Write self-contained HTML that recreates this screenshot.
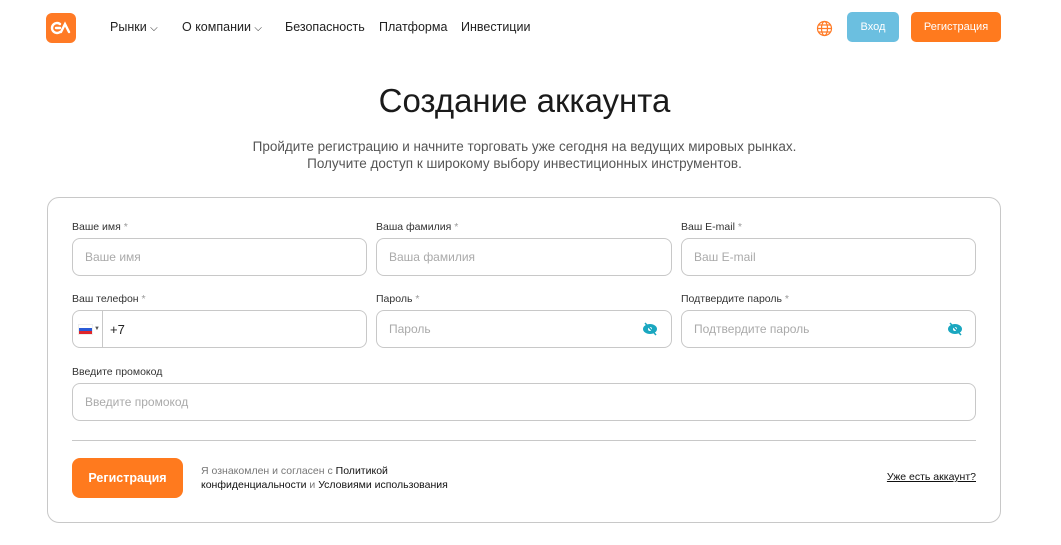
<!DOCTYPE html>
<html><head><meta charset="utf-8"><style>
*{box-sizing:border-box;margin:0;padding:0}
body{width:1061px;height:545px;background:#fff;font-family:"Liberation Sans",sans-serif;color:#222;position:relative;overflow:hidden}
.a{position:absolute}
.nav{font-size:12.5px;color:#222;top:20px}
.lbl{font-size:10.5px;color:#333}
.lbl i{font-style:normal;color:#999}
.in{height:38px;border:1px solid #c8c8c8;border-radius:8px;font-size:12px;color:#aaa;padding-left:12px;line-height:36px}
</style></head><body>
<div class="a" style="left:46px;top:13px;width:30px;height:30px;background:#ff7a25;border-radius:6px">
<svg width="30" height="30" viewBox="0 0 30 30"><path d="M14 11a5 5 0 1 0 0 8M10 15h4M15 19l4-8 4 8" stroke="#fff" stroke-width="2.4" fill="none" stroke-linecap="round"/></svg></div>
<div class="a nav" style="left:110px">Рынки <span style="font-size:10px">⌵</span></div>
<div class="a nav" style="left:182px">О компании <span style="font-size:10px">⌵</span></div>
<div class="a nav" style="left:285px">Безопасность</div>
<div class="a nav" style="left:379px">Платформа</div>
<div class="a nav" style="left:461px">Инвестиции</div>
<svg class="a" style="left:816px;top:20px" width="17" height="17" viewBox="0 0 17 17" fill="none" stroke="#ff7a25" stroke-width="1.2"><circle cx="8.5" cy="8.5" r="7"/><ellipse cx="8.5" cy="8.5" rx="3" ry="7"/><path d="M1.5 8.5h14M2.5 5h12M2.5 12h12"/></svg>
<div class="a" style="left:847px;top:12px;width:52px;height:30px;background:#6bbfe0;border-radius:5px;color:#fff;font-size:11px;text-align:center;line-height:30px">Вход</div>
<div class="a" style="left:911px;top:12px;width:90px;height:30px;background:#ff7a1e;border-radius:5px;color:#fff;font-size:11px;text-align:center;line-height:30px">Регистрация</div>
<div class="a" style="left:0;width:1049px;top:82px;text-align:center;font-size:33px;color:#1a1a1a">Создание аккаунта</div>
<div class="a" style="left:0;width:1049px;top:138px;text-align:center;font-size:13.5px;color:#555;line-height:17px">Пройдите регистрацию и начните торговать уже сегодня на ведущих мировых рынках.<br>Получите доступ к широкому выбору инвестиционных инструментов.</div>
<div class="a" style="left:47px;top:197px;width:954px;height:326px;border:1px solid #c8c8c8;border-radius:12px"></div>
<div class="a lbl" style="left:72px;top:221px">Ваше имя <i>*</i></div>
<div class="a lbl" style="left:376px;top:221px">Ваша фамилия <i>*</i></div>
<div class="a lbl" style="left:681px;top:221px">Ваш E-mail <i>*</i></div>
<div class="a in" style="left:72px;top:238px;width:295px">Ваше имя</div>
<div class="a in" style="left:376px;top:238px;width:296px">Ваша фамилия</div>
<div class="a in" style="left:681px;top:238px;width:295px">Ваш E-mail</div>
<div class="a lbl" style="left:72px;top:293px">Ваш телефон <i>*</i></div>
<div class="a lbl" style="left:376px;top:293px">Пароль <i>*</i></div>
<div class="a lbl" style="left:681px;top:293px">Подтвердите пароль <i>*</i></div>
<div class="a in" style="left:72px;top:310px;width:295px;padding:0"></div>
<div class="a" style="left:102px;top:311px;width:1px;height:36px;background:#c8c8c8"></div>
<div class="a" style="left:79px;top:325px;width:13px;height:9px;background:linear-gradient(#fff 33%,#2a5bd7 33% 66%,#e0262b 66%);outline:1px solid #eee"></div>
<div class="a" style="left:94px;top:326px;font-size:6px;color:#555">▼</div>
<div class="a" style="left:110px;top:322px;font-size:13px;color:#222">+7</div>
<div class="a in" style="left:376px;top:310px;width:296px">Пароль</div>
<div class="a in" style="left:681px;top:310px;width:295px">Подтвердите пароль</div>
<svg class="a" style="left:642px;top:322px" width="16" height="14" viewBox="0 0 16 14"><ellipse cx="8" cy="7" rx="7" ry="5" fill="#1aa7c0"/><circle cx="8" cy="7" r="2" fill="#fff"/><path d="M3 1l11 12" stroke="#1aa7c0" stroke-width="1.5"/></svg>
<svg class="a" style="left:947px;top:322px" width="16" height="14" viewBox="0 0 16 14"><ellipse cx="8" cy="7" rx="7" ry="5" fill="#1aa7c0"/><circle cx="8" cy="7" r="2" fill="#fff"/><path d="M3 1l11 12" stroke="#1aa7c0" stroke-width="1.5"/></svg>
<div class="a lbl" style="left:72px;top:366px">Введите промокод</div>
<div class="a in" style="left:72px;top:383px;width:904px">Введите промокод</div>
<div class="a" style="left:72px;top:440px;width:904px;height:1px;background:#c8c8c8"></div>
<div class="a" style="left:72px;top:458px;width:111px;height:40px;background:#ff7a1e;border-radius:8px;color:#fff;font-size:12.5px;font-weight:bold;text-align:center;line-height:40px">Регистрация</div>
<div class="a" style="left:201px;top:464px;font-size:10.5px;line-height:14px;color:#777">Я ознакомлен и согласен с <span style="color:#111">Политикой<br>конфиденциальности</span> и <span style="color:#111">Условиями использования</span></div>
<div class="a" style="right:85px;top:471px;font-size:10.5px;color:#111;text-decoration:underline">Уже есть аккаунт?</div>
</body></html>
